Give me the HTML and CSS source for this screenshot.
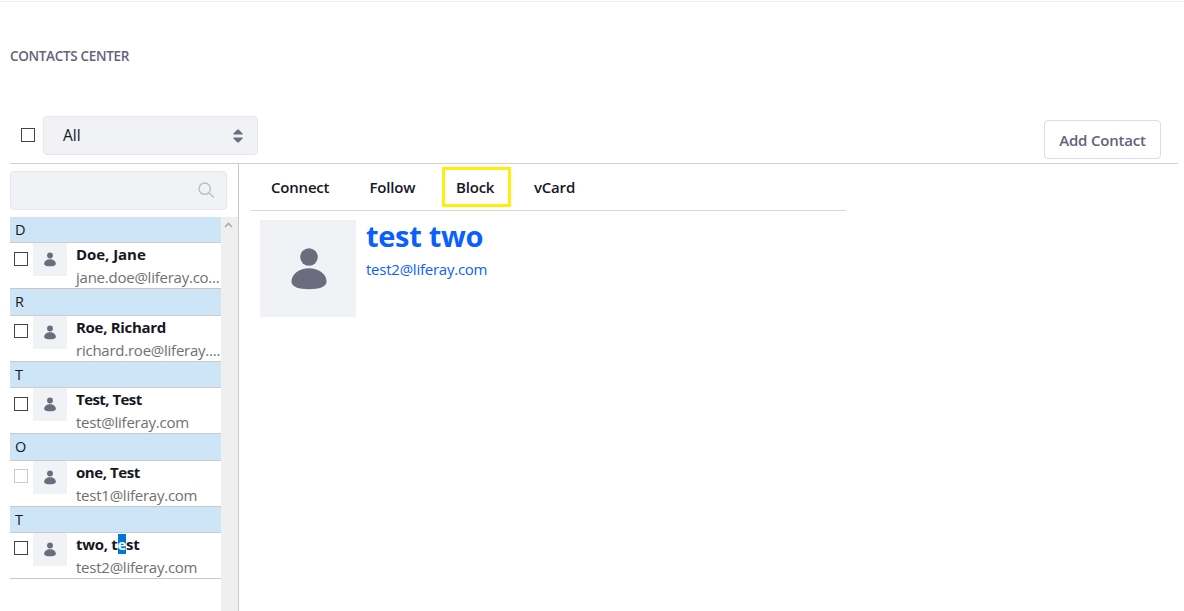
FILE: index.html
```html
<!DOCTYPE html>
<html lang="en">
<head>
<meta charset="utf-8">
<title>Contacts Center</title>
<link rel="stylesheet" href="styles.css">
</head>
<body>
<svg class="defs" aria-hidden="true">
  <symbol id="user" viewBox="0 0 36 42">
    <circle cx="18" cy="9" r="8.8"/>
    <path d="M18 20.2C27.500 20.200 35.500 26 35.500 33.500C35.500 39 28 41.200 18 41.200S.5 39 .5 33.500C.5 26 8.500 20.200 18 20.200Z"/>
  </symbol>
</svg>
<main class="page">
  <h1 class="title"><span>CONTACTS CENTER</span></h1>
  <div class="toolbar">
    <span class="check"></span>
    <div class="select"><span>All</span>
      <svg width="10" height="14" viewBox="0 0 10 14"><path d="M.6 5.500Q0 5.300.4 4.600L4.200.7Q5-.1 5.800.7L9.600 4.600Q10 5.300 9.400 5.500ZM.6 8.500Q0 8.700.4 9.400L4.200 13.300Q5 14.100 5.800 13.300L9.600 9.400Q10 8.700 9.400 8.500Z"/></svg>
    </div>
    <button class="add"><span>Add Contact</span></button>
  </div>
  <div class="columns">
    <aside class="sidebar">
      <div class="search"><svg width="17" height="17" viewBox="0 0 17 17"><circle cx="6.700" cy="6.700" r="5.700"/><path d="M10.800 10.800L15.800 15.500"/></svg></div>
      <div class="list-wrap">
        <div class="list">
          <div class="letter">D</div>
          <div class="contact"><span class="check"></span><span class="thumb"><svg><use href="#user"/></svg></span><div class="info"><b class="loose">Doe, Jane</b><span>jane.doe@liferay.co...</span></div></div>
          <div class="letter">R</div>
          <div class="contact"><span class="check"></span><span class="thumb"><svg><use href="#user"/></svg></span><div class="info"><b>Roe, Richard</b><span>richard.roe@liferay....</span></div></div>
          <div class="letter">T</div>
          <div class="contact"><span class="check"></span><span class="thumb"><svg><use href="#user"/></svg></span><div class="info"><b class="tight">Test, Test</b><span>test@liferay.com</span></div></div>
          <div class="letter">O</div>
          <div class="contact"><span class="check disabled"></span><span class="thumb"><svg><use href="#user"/></svg></span><div class="info"><b class="snug">one, Test</b><span>test1@liferay.com</span></div></div>
          <div class="letter">T</div>
          <div class="contact"><span class="check"></span><span class="thumb"><svg><use href="#user"/></svg></span><div class="info"><b>two, t<mark>e</mark>st</b><span>test2@liferay.com</span></div></div>
        </div>
        <div class="scroll"><svg width="9" height="6" viewBox="0 0 9 6"><path d="M1 5L4.500 1.500L8 5"/></svg></div>
      </div>
    </aside>
    <section class="detail">
      <nav class="tabs"><a class="connect">Connect</a><a class="follow">Follow</a><a class="block">Block</a><a class="vcard">vCard</a></nav>
      <div class="profile">
        <div class="portrait"><svg><use href="#user"/></svg></div>
        <div class="who"><h2><span>test two</span></h2><a>test2@liferay.com</a></div>
      </div>
    </section>
  </div>
</main>
</body>
</html>
```
FILE: styles.css
```css
* { box-sizing: border-box; }
body {
  margin: 0;
  height: 611px;
  overflow: hidden;
  background: #fff;
  color: #17171f;
  font: 15px/20px "Open Sans", "Noto Sans", sans-serif;
}
.defs { display: none; }
.page {
  height: 611px;
  padding: 0 6px 0 10px;
  display: flex;
  flex-direction: column;
  background: linear-gradient(#efeff1, #efeff1) 0 1px / 100% 1px no-repeat;
}
.title {
  margin: 46px 0 0;
  color: #62637a;
  font-size: 13.5px;
  line-height: 20px;
  font-weight: 600;
  letter-spacing: -0.32px;
}
.toolbar {
  height: 98px;
  flex: none;
  display: flex;
  align-items: flex-start;
  padding: 50px 17px 0 11px;
  border-bottom: 1px solid #cfcfcf;
}
.check {
  flex: none;
  width: 14px;
  height: 14px;
  border: 1px solid #444;
  background: #fff;
}
.toolbar .check { margin-top: 12px; }
.check.disabled { border-color: #ccc; }
.select {
  width: 215px;
  height: 39px;
  margin-left: 8px;
  padding: 0 14px 0 19px;
  display: flex;
  align-items: center;
  justify-content: space-between;
  border: 1px solid #e7e7ed;
  border-radius: 4px;
  background: #f1f2f5;
}
.select span { padding-bottom: 1px; font-size: 15.5px; }
.select svg { fill: #6b6c7e; }
.add {
  width: 117px;
  height: 39px;
  margin: 4px 0 0 auto;
  padding: 1px 0 0;
  border: 1px solid #dcdce6;
  border-radius: 4px;
  background: #fff;
  color: #62637a;
  font: 600 15px/20px "Open Sans", sans-serif;
  letter-spacing: -0.2px;
}
.columns { flex: 1; min-height: 0; display: flex; }
.sidebar {
  width: 229px;
  flex: none;
  display: flex;
  flex-direction: column;
  border-right: 1px solid #c9c9c9;
}
.search {
  width: 217px;
  height: 39px;
  flex: none;
  margin: 7px 0;
  padding-right: 11px;
  display: flex;
  align-items: center;
  justify-content: flex-end;
  border: 1px solid #e7e7ed;
  border-radius: 4px;
  background: #f1f2f5;
}
.search svg { fill: none; stroke: #bbb; stroke-width: 1.3; }
.list-wrap { flex: 1; min-height: 0; display: flex; }
.list { width: 211.4px; flex: none; }
.letter {
  height: 25.4px;
  padding: 3px 0 0 5px;
  line-height: 20px;
  font-size: 14.5px;
  background: #cde5f7;
}
.contact {
  height: 47px;
  display: flex;
  border-top: 1px solid #ccc;
  border-bottom: 1px solid #c8c8c8;
}
.contact .check { margin: 8.5px 0 0 4px; }
.thumb {
  width: 34px;
  height: 33px;
  flex: none;
  margin-left: 5px;
  display: grid;
  place-items: center;
  background: #f1f2f5;
}
.thumb svg { width: 12px; height: 15px; fill: #6b6c7e; }
.info { margin: -1px 0 0 9px; white-space: nowrap; }
.info b, .info span { display: block; width: max-content; }
.info b { line-height: 24px; font-weight: 700; font-size: 15px; letter-spacing: -0.3px; }
.info b.loose { letter-spacing: -0.05px; }
.info b.snug { letter-spacing: -0.42px; }
.info b.tight { letter-spacing: -0.55px; }
.info span { line-height: 22px; color: #707070; letter-spacing: -0.24px; }
.info mark { display: inline-block; line-height: 20px; background: #0078d7; color: #fff; }
.scroll { flex: 1; background: #efefef; text-align: center; line-height: 0; padding: 5px 2px 0 0; }
.scroll svg { fill: none; stroke: #aaa; stroke-width: 1.6; }
.detail { width: 607px; padding-left: 12px; }
.tabs {
  height: 47px;
  display: flex;
  align-items: flex-start;
  padding-top: 3px;
  border-bottom: 1px solid #d8d8d8;
  font-weight: 600;
  letter-spacing: -0.2px;
}
.tabs a { line-height: 41px; }
.connect { width: 98.5px; margin-left: 20px; }
.follow { width: 72.5px; }
.tabs .block {
  width: 69px;
  height: 40px;
  padding-left: 11px;
  line-height: 35px;
  border: 3px solid #ffee0a;
}
.vcard { margin-left: 23px; }
.profile { display: flex; padding: 9px 0 0 9px; }
.portrait {
  width: 96px;
  height: 97px;
  padding-left: 1px;
  display: grid;
  place-items: center;
  background: #f1f2f5;
}
.portrait svg { width: 36px; height: 42px; fill: #6b6c7e; }
.who { margin: -1px 0 0 10px; color: #0b5fff; }
.who h2 { margin: 0; font-size: 29px; line-height: 34px; font-weight: 700; letter-spacing: -0.3px; }
.who a { display: block; margin-top: 6px; line-height: 20px; letter-spacing: -0.24px; }
```
